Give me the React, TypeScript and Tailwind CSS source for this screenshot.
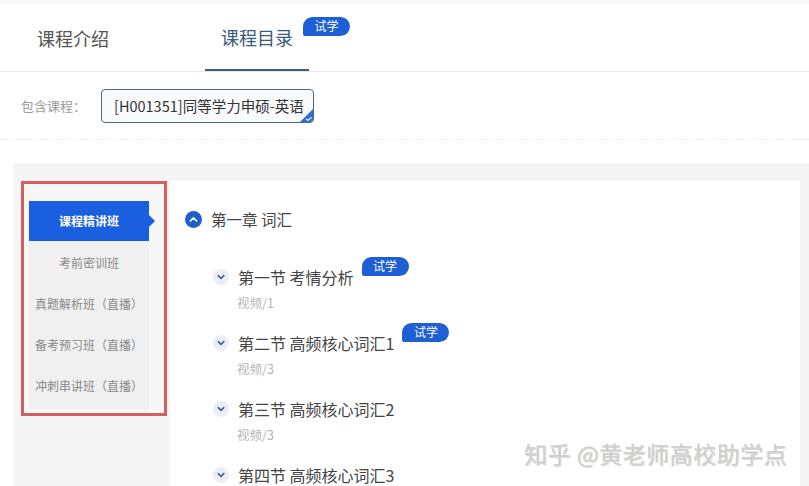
import React from 'react';

const font = { fontFamily: '"Noto Sans CJK SC", "Noto Sans", sans-serif' };

const classes = ['课程精讲班', '考前密训班', '真题解析班（直播）', '备考预习班（直播）', '冲刺串讲班（直播）'];

const sections = [
  { title: '第一节 考情分析', sub: '视频/1', trial: true },
  { title: '第二节 高频核心词汇1', sub: '视频/3', trial: true },
  { title: '第三节 高频核心词汇2', sub: '视频/3', trial: false },
  { title: '第四节 高频核心词汇3', sub: '视频/3', trial: false },
];

function TrialBadge({ className = '' }: { className?: string }) {
  return (
    <span className={`inline-flex h-[19px] w-[47px] shrink-0 items-center justify-center rounded-[10px] rounded-bl-[3px] bg-[#1e5fd6] text-[12px] leading-none text-white ${className}`}>
      试学
    </span>
  );
}

function ChevronUpCircle() {
  return (
    <svg width="17" height="17" viewBox="0 0 17 17" aria-hidden="true">
      <circle cx="8.5" cy="8.5" r="8.5" fill="#1f5fc9" />
      <path d="M5.3 10 L8.5 6.8 L11.7 10" fill="none" stroke="#fff" strokeWidth="1.7" strokeLinecap="round" strokeLinejoin="round" />
    </svg>
  );
}

function ChevronDownCircle() {
  return (
    <svg width="16" height="16" viewBox="0 0 16 16" aria-hidden="true">
      <circle cx="8" cy="8" r="8" fill="#e9eef8" />
      <path d="M5.2 6.6 L8 9.4 L10.8 6.6" fill="none" stroke="#3c5c94" strokeWidth="1.5" strokeLinecap="round" strokeLinejoin="round" />
    </svg>
  );
}

export default function App() {
  return (
    <div className="relative h-[486px] w-[809px] overflow-hidden bg-white" style={font}>
      <div className="h-[4px] bg-[#f7f7f7]" />

      {/* tabs */}
      <div className="flex h-[68px] items-stretch border-b border-[#e6e6e6]">
        <div className="flex w-[145px] items-center pl-[37px] pt-[2px] text-[18px] text-[#555]">课程介绍</div>
        <div className="ml-[60px] flex w-[104px] items-center whitespace-nowrap border-b-[2px] border-[#40607f] pl-[16px] pt-[2px] text-[18px] text-[#3b5a7d]">
          <span className="shrink-0">课程目录</span>
          <TrialBadge className="-mt-[23px] ml-[10px]" />
        </div>
      </div>

      {/* filter */}
      <div className="flex items-center pl-[21px] pt-[17px]">
        <span className="w-[80px] text-[13px] text-[#9a9a9a]">包含课程：</span>
        <div className="relative flex h-[34px] w-[213px] items-center overflow-hidden whitespace-nowrap rounded-[4px] border border-[#4a6888] bg-[#f8fafc] pl-[12px] text-[14.5px] text-[#333]">
          [H001351]同等学力申硕-英语
          <svg className="absolute bottom-0 right-0" width="13" height="13" viewBox="0 0 13 13" aria-hidden="true">
            <path d="M13 0 L13 13 L0 13 Z" fill="#2f6ed8" />
            <path d="M6 10 L8 11.3 L11.6 8.3" fill="none" stroke="#fff" strokeWidth="1.1" />
          </svg>
        </div>
      </div>

      <div className="mt-[16px] border-t border-dashed border-[#ececec]" />

      {/* body */}
      <div className="ml-[13px] mt-[23px] flex h-[400px] gap-[3px] bg-[#f5f5f5] pl-[8px] pr-[9px] pt-[18px]">
        <div className="h-[235px] w-[146px] shrink-0 border-[3px] border-[#d45f5f] bg-[#f7f7f7] pl-[5px] pt-[17px]">
          <div className="w-[120px] bg-[#f0f0f0] pb-[3px]">
            {classes.map((c, i) =>
              i === 0 ? (
                <div key={c} className="relative mb-[1px] flex h-[40px] items-center justify-center bg-[#1a5fe0] text-[12px] font-bold text-white">
                  {c}
                  <span className="absolute -right-[6px] top-[14px] h-0 w-0 border-y-[6px] border-l-[6px] border-y-transparent border-l-[#1a5fe0]" />
                </div>
              ) : (
                <div key={c} className="flex h-[41px] items-center justify-center whitespace-nowrap text-[12px] text-[#888]">
                  {c}
                </div>
              ),
            )}
          </div>
        </div>

        <div className="flex-1 bg-white pl-[15px] pt-[27px]">
          <div className="flex items-center gap-[9px]">
            <ChevronUpCircle />
            <span className="text-[15.5px] text-[#444]">第一章 词汇</span>
          </div>
          <div className="mt-[34px] flex flex-col gap-[14px] pl-[28px]">
            {sections.map((s) => (
              <div key={s.title} className="flex flex-col">
                <div className="flex items-center gap-[9px]">
                  <ChevronDownCircle />
                  <span className="text-[16px] leading-[24px] text-[#444]">{s.title}</span>
                  {s.trial && <TrialBadge className="-mt-[22px] -ml-[1px]" />}
                </div>
                <span className="pl-[24px] text-[12.5px] leading-[28px] text-[#b5b5b5]">{s.sub}</span>
              </div>
            ))}
          </div>
        </div>
      </div>

      <div className="absolute left-[524px] top-[436px] text-[23px] tracking-[0.5px] text-[#d0d0d0] [text-shadow:1px_1px_1px_rgba(0,0,0,0.18)]">
        知乎 @黄老师高校助学点
      </div>
    </div>
  );
}
